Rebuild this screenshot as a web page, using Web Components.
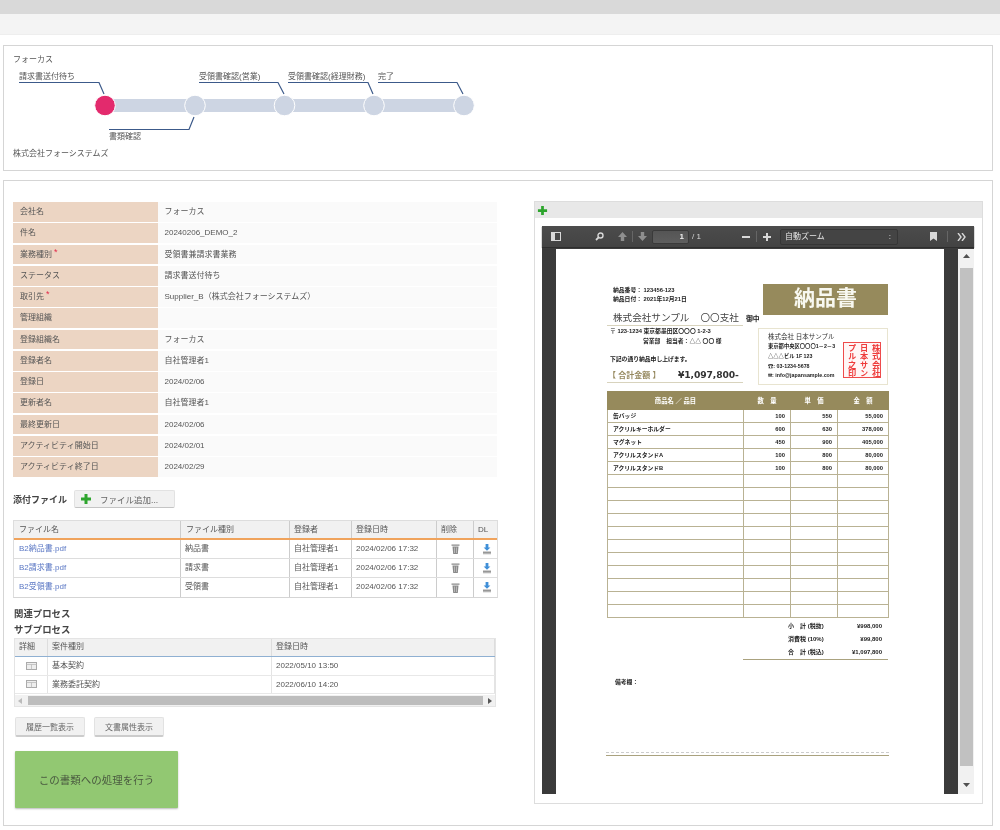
<!DOCTYPE html>
<html lang="ja">
  <head>
    <meta charset="UTF-8" />
    <title>書類詳細</title>
    <style>
      html, body { margin: 0; height: 830px; overflow: hidden; background: #fff; }
      body {
        font: 8px "Liberation Sans", "Noto Sans CJK JP", sans-serif;
        color: #555;
        filter: blur(0.42px);
      }
    </style>
  </head>
  <body>
    <app-topbar></app-topbar>
    <flow-panel company="フォーカス" footer="株式会社フォーシステムズ"></flow-panel>
    <doc-panel>
      <attr-table>
        <attr-row label="会社名">フォーカス</attr-row>
        <attr-row label="件名">20240206_DEMO_2</attr-row>
        <attr-row label="業務種別" required>受領書兼請求書業務</attr-row>
        <attr-row label="ステータス">請求書送付待ち</attr-row>
        <attr-row label="取引先" required>Supplier_B（株式会社フォーシステムズ）</attr-row>
        <attr-row label="管理組織"></attr-row>
        <attr-row label="登録組織名">フォーカス</attr-row>
        <attr-row label="登録者名">自社管理者1</attr-row>
        <attr-row label="登録日">2024/02/06</attr-row>
        <attr-row label="更新者名">自社管理者1</attr-row>
        <attr-row label="最終更新日">2024/02/06</attr-row>
        <attr-row label="アクティビティ開始日">2024/02/01</attr-row>
        <attr-row label="アクティビティ終了日">2024/02/29</attr-row>
      </attr-table>
      <file-table>
        <file-row name="B2納品書.pdf" kind="納品書"></file-row>
        <file-row name="B2請求書.pdf" kind="請求書"></file-row>
        <file-row name="B2受領書.pdf" kind="受領書"></file-row>
      </file-table>
      <sub-process>
        <sub-row kind="基本契約" date="2022/05/10 13:50"></sub-row>
        <sub-row kind="業務委託契約" date="2022/06/10 14:20"></sub-row>
      </sub-process>
      <action-bar></action-bar>
      <pdf-viewer slot="right">
        <invoice-page></invoice-page>
      </pdf-viewer>
    </doc-panel>

    <script>
      const plusIcon = (s) => `<svg width="${s}" height="${s}" viewBox="0 0 12 12"><path d="M4.5 1h3v3.5H11v3H7.5V11h-3V7.5H1v-3h3.5z" fill="#2ea52e"/></svg>`;

      class AppTopbar extends HTMLElement {
        constructor() {
          super();
          this.attachShadow({ mode: 'open' }).innerHTML = `
            <style>
              :host { display: block; }
              .a { height: 14px; background: #d9d9d9; }
              .b { height: 20px; background: #f4f4f4; border-bottom: 1px solid #eee; }
            </style>
            <div class="a"></div><div class="b"></div>`;
        }
      }
      customElements.define('app-topbar', AppTopbar);

      // 進捗ダイアグラム
      class FlowPanel extends HTMLElement {
        constructor() {
          super();
          const line = '#3c5a8a';
          const nodes = [105, 195, 284.5, 374, 464];
          const upper = [
            ['請求書送付待ち', 19, 99, 104],
            ['受領書確認(営業)', 199, 278, 284],
            ['受領書確認(経理財務)', 288, 368, 373],
            ['完了', 378, 457, 463],
          ];
          let svg = `<rect x="105" y="99" width="359" height="13" fill="#cdd5e3"/>`;
          nodes.forEach((x, i) => {
            svg += `<circle cx="${x}" cy="105.5" r="10.3" fill="${i ? '#cdd5e3' : '#e32a6d'}" stroke="#fff" stroke-width="1"/>`;
          });
          upper.forEach(([t, x1, x2, x3]) => {
            svg += `<text x="${x1}" y="79">${t}</text>`;
            svg += `<path d="M${x1} 82.5H${x2}L${x3} 94" fill="none" stroke="${line}" stroke-width="1.2"/>`;
          });
          svg += `<path d="M109 129.5H189L194 117" fill="none" stroke="${line}" stroke-width="1.2"/>`;
          svg += `<text x="109" y="139">書類確認</text>`;
          this.attachShadow({ mode: 'open' }).innerHTML = `
            <style>
              :host { display: block; margin: 10px 7px 9px 3px; border: 1px solid #d5d5d5; padding: 8px 9px 10px; height: 106px; }
              .t { line-height: 12px; }
              svg { display: block; }
              text { font: 8px "Liberation Sans", "Noto Sans CJK JP", sans-serif; fill: #555; }
            </style>
            <div class="t">${this.getAttribute('company')}</div>
            <svg width="480" height="82" viewBox="13 66 480 82">${svg}</svg>
            <div class="t">${this.getAttribute('footer')}</div>`;
        }
      }
      customElements.define('flow-panel', FlowPanel);

      class DocPanel extends HTMLElement {
        constructor() {
          super();
          this.attachShadow({ mode: 'open' }).innerHTML = `
            <style>
              :host { display: flex; gap: 35px; margin: 0 7px 0 3px; border: 1px solid #d5d5d5; padding: 20px 9px 0; height: 624px; }
              .l { width: 486px; flex: none; }
              .r { width: 449px; flex: none; }
            </style>
            <div class="l"><slot></slot></div>
            <div class="r"><slot name="right"></slot></div>`;
        }
      }
      customElements.define('doc-panel', DocPanel);

      class AttrTable extends HTMLElement {
        constructor() {
          super();
          this.attachShadow({ mode: 'open' }).innerHTML = `
            <style>
              :host { display: grid; grid-auto-rows: 1fr; row-gap: 1.4px; height: 275px; margin-top: 1px; width: 484px; }
            </style>
            <slot></slot>`;
        }
      }
      customElements.define('attr-table', AttrTable);

      class AttrRow extends HTMLElement {
        constructor() {
          super();
          const star = this.hasAttribute('required') ? '<span class="req">*</span>' : '';
          this.attachShadow({ mode: 'open' }).innerHTML = `
            <style>
              :host { display: grid; grid-template-columns: 144.5px 1fr; line-height: 19px; }
              .k { background: #ecd5c3; padding-left: 7px; }
              .v { background: #fafafa; padding-left: 7px; }
              .req { color: #e32a4a; font-size: 9px; margin-left: 2px; position: relative; top: -2px; }
            </style>
            <div class="k">${this.getAttribute('label')}${star}</div>
            <div class="v"><slot></slot></div>`;
        }
      }
      customElements.define('attr-row', AttrRow);

      class FileTable extends HTMLElement {
        constructor() {
          super();
          const head = ['ファイル名', 'ファイル種別', '登録者', '登録日時', '削除', 'DL'];
          this.attachShadow({ mode: 'open' }).innerHTML = `
            <style>
              :host { display: block; --cols: 167px 109px 62px 85px 37px 25px; }
              .bar { display: flex; align-items: center; gap: 7px; margin-top: 13px; height: 18px; }
              b { font-size: 9px; color: #444; }
              button {
                display: flex; align-items: center; width: 101px; height: 18px; padding: 0 0 0 5px; gap: 8px;
                border: 1px solid #e2e2e2; border-bottom-color: #c4c4c4; border-radius: 2px; background: #f1f1f1;
                font: 8.5px "Liberation Sans", "Noto Sans CJK JP", sans-serif; color: #666;
              }
              .tb { margin-top: 12px; width: 485px; border: 1px solid #ddd; border-bottom: 1px solid #d5d5d5; box-sizing: border-box; }
              .hd { display: grid; grid-template-columns: var(--cols); height: 19px; line-height: 17px; background: #f1f1f1; border-bottom: 2px solid #f0a35c; box-sizing: border-box; }
              .hd div { padding-left: 5px; border-right: 1px solid #ccc; }
              .hd div:nth-child(n+3) { padding-left: 4px; }
              .hd div:last-child { border-right: 0; }
            </style>
            <div class="bar"><b>添付ファイル</b><button>${plusIcon(12)}<span>ファイル追加...</span></button></div>
            <div class="tb">
              <div class="hd">${head.map((t) => `<div>${t}</div>`).join('')}</div>
              <slot></slot>
            </div>`;
        }
      }
      customElements.define('file-table', FileTable);

      class FileRow extends HTMLElement {
        constructor() {
          super();
          this.attachShadow({ mode: 'open' }).innerHTML = `
            <style>
              :host { display: grid; grid-template-columns: var(--cols); height: 19px; line-height: 18px; box-sizing: border-box; border-bottom: 1px solid #ddd; }
              :host(:last-child) { border-bottom: 0; }
              div { padding-left: 5px; border-right: 1px solid #ccc; overflow: hidden; white-space: nowrap; }
              div:nth-child(n+3) { padding-left: 4px; }
              div:last-child { border-right: 0; }
              .n { color: #5a77c4; }
              div.i { display: flex; align-items: center; justify-content: center; padding: 0; }
            </style>
            <div class="n">${this.getAttribute('name')}</div>
            <div>${this.getAttribute('kind')}</div>
            <div>自社管理者1</div>
            <div>2024/02/06 17:32</div>
            <div class="i"><svg width="9" height="10" viewBox="0 0 9 10"><path d="M0.5 .5h8v1.3h-8zM1.5 2.6h6L6.8 10H2.2z" fill="#8a8a8a"/><path d="M3.5 3.5v5.5M5.5 3.5v5.5" stroke="#ccc" stroke-width=".7"/></svg></div>
            <div class="i"><svg width="10" height="11" viewBox="0 0 10 11"><path d="M3.6 0h2.8v3.4h2L5 6.8 1.6 3.4h2z" fill="#3f8fd8"/><path d="M1 7.5h8v2.8H1z" fill="#b5b5b5"/><path d="M1 8.3h8" stroke="#777" stroke-width=".6"/></svg></div>`;
        }
      }
      customElements.define('file-row', FileRow);

      class SubProcess extends HTMLElement {
        constructor() {
          super();
          this.attachShadow({ mode: 'open' }).innerHTML = `
            <style>
              :host { display: block; --cols: 33px 224px 1fr; }
              h4 { margin: 0; font-size: 9.4px; line-height: 14px; color: #444; padding-left: 1px; }
              .rel { margin-top: 9px; }
              .sub { margin-top: 2px; }
              .tb { margin: 1px 0 0 1px; width: 482px; border: 1px solid #e4e4e4; box-sizing: border-box; }
              .hd { display: grid; grid-template-columns: var(--cols); height: 18px; line-height: 16px; background: #f1f1f1; border-bottom: 1px solid #8fb0d2; box-sizing: border-box; }
              .hd div { padding-left: 4px; border-right: 1px solid #ddd; }
              .sb { display: flex; align-items: center; height: 11px; background: #f1f1f1; margin-top: 1px; justify-content: space-between; padding: 0 3px; }
              .sb i { flex: 1; height: 9px; background: #bdbdbd; margin: 0 5px 0 6px; }
              svg { display: block; }
            </style>
            <h4 class="rel">関連プロセス</h4>
            <h4 class="sub">サブプロセス</h4>
            <div class="tb">
              <div class="hd"><div>詳細</div><div>案件種別</div><div>登録日時</div></div>
              <slot></slot>
              <div class="sb">
                <svg width="4" height="6" viewBox="0 0 4 6"><path d="M4 0v6L0 3z" fill="#bbb"/></svg>
                <i></i>
                <svg width="4" height="6" viewBox="0 0 4 6"><path d="M0 0v6l4-3z" fill="#555"/></svg>
              </div>
            </div>`;
        }
      }
      customElements.define('sub-process', SubProcess);

      class SubRow extends HTMLElement {
        constructor() {
          super();
          this.attachShadow({ mode: 'open' }).innerHTML = `
            <style>
              :host { display: grid; grid-template-columns: var(--cols); height: 18.5px; line-height: 17px; border-bottom: 1px solid #e8e8e8; box-sizing: border-box; }
              div { padding-left: 4px; border-right: 1px solid #e4e4e4; }
              div.i { display: flex; align-items: center; justify-content: center; padding: 0; }
            </style>
            <div class="i"><svg width="11" height="8" viewBox="0 0 11 8"><rect x=".5" y=".5" width="10" height="7" fill="#eee" stroke="#aaa"/><path d="M.5 2.5h10M5.5 2.5v5" stroke="#bbb" stroke-width=".8"/></svg></div>
            <div>${this.getAttribute('kind')}</div>
            <div>${this.getAttribute('date')}</div>`;
        }
      }
      customElements.define('sub-row', SubRow);

      class ActionBar extends HTMLElement {
        constructor() {
          super();
          this.attachShadow({ mode: 'open' }).innerHTML = `
            <style>
              :host { display: block; padding-left: 2px; }
              .btns { display: flex; gap: 9px; margin-top: 10px; }
              button {
                width: 70px; height: 20px; padding: 0; border: 1px solid #e2e2e2; border-bottom: 2px solid #ccc; border-radius: 2px;
                background: #f1f1f1; font: 8px "Liberation Sans", "Noto Sans CJK JP", sans-serif; color: #666;
              }
              .go {
                display: block; margin-top: 14px; width: 163px; height: 57px; border: 0; border-radius: 1px;
                background: #92c872; box-shadow: 0 1px 2px #bbb; font-size: 10.5px; color: #4a5a40;
              }
            </style>
            <div class="btns"><button>履歴一覧表示</button><button>文書属性表示</button></div>
            <button class="go">この書類への処理を行う</button>`;
        }
      }
      customElements.define('action-bar', ActionBar);

      class PdfViewer extends HTMLElement {
        constructor() {
          super();
          const c = '#d8d8d8';
          this.attachShadow({ mode: 'open' }).innerHTML = `
            <style>
              :host { display: block; border: 1px solid #ddd; height: 603px; box-sizing: border-box; }
              .cap { height: 16px; background: #e8e8e8; display: flex; align-items: center; padding-left: 2px; }
              .view { margin: 8px 8px 0 7px; height: 568px; background: #404040; display: flex; flex-direction: column; }
              .tool {
                flex: none; height: 21px; background: linear-gradient(#4c4c4c, #434343); display: flex; align-items: center; color: ${c};
                box-shadow: 0 1px 1px #2e2e2e; padding-left: 9px;
              }
              .tool > * { flex: none; }
              .sep { width: 1px; height: 11px; background: #666; }
              .num { width: 37px; height: 14px; box-sizing: border-box; background: linear-gradient(#555, #5e5e5e); border: 1px solid #3a3a3a; border-radius: 2px; text-align: right; padding-right: 4px; line-height: 12px; font-size: 8px; font-weight: bold; color: #eee; }
              .sel { width: 118px; height: 16px; box-sizing: border-box; background: #444; border: 1px solid #363636; border-radius: 2px; display: flex; justify-content: space-between; padding: 0 6px 0 4px; line-height: 14px; color: #e6e6e6; }
              .main { flex: 1; display: flex; min-height: 0; padding-top: 2px; }
              .can { flex: 1; padding: 0 14px; background: linear-gradient(90deg, #3a3a3a, #444 50%, #3a3a3a); overflow: hidden; }
              .sbar { width: 16px; background: #f1f1f1; display: flex; flex-direction: column; align-items: center; }
              .sbar i { width: 13px; flex: 1; background: #c1c1c1; margin: 10px 0 17px; }
              .sbar svg { margin-top: 5px; }
              .sbar svg:last-child { margin: 0 0 7px; }
              svg { display: block; }
            </style>
            <div class="cap">${plusIcon(11)}</div>
            <div class="view">
              <div class="tool">
                <svg width="10" height="9" viewBox="0 0 10 9"><rect x=".5" y=".5" width="9" height="8" fill="none" stroke="${c}"/><path d="M1 1h3v7H1z" fill="${c}"/></svg>
                <svg style="margin-left:34px" width="9" height="9" viewBox="0 0 9 9"><circle cx="5.5" cy="3.5" r="2.5" fill="none" stroke="${c}" stroke-width="1.4"/><path d="M3.6 5.4L1 8" stroke="${c}" stroke-width="1.8"/></svg>
                <svg style="margin-left:14px" width="9" height="9" viewBox="0 0 9 9"><path d="M4.5 0L9 5H6.2v4H2.8V5H0z" fill="#8f8f8f"/></svg>
                <div class="sep" style="margin:0 5px 0 5px"></div>
                <svg width="9" height="9" viewBox="0 0 9 9"><path d="M4.5 9L0 4h2.8V0h3.4v4H9z" fill="#8f8f8f"/></svg>
                <div class="num" style="margin-left:5px">1</div>
                <span style="margin-left:3px">/ 1</span>
                <svg style="margin-left:41px" width="8" height="8" viewBox="0 0 8 8"><path d="M0 3h8v2H0z" fill="${c}"/></svg>
                <div class="sep" style="margin:0 6px 0 6px"></div>
                <svg width="8" height="8" viewBox="0 0 8 8"><path d="M3 0h2v3h3v2H5v3H3V5H0V3h3z" fill="${c}"/></svg>
                <div class="sel" style="margin-left:9px"><span>自動ズーム</span><span>:</span></div>
                <svg style="margin-left:32px" width="7" height="9" viewBox="0 0 7 9"><path d="M0 0h7v9L3.5 6.5 0 9z" fill="${c}"/></svg>
                <div class="sep" style="margin-left:10px"></div>
                <svg style="margin-left:9px" width="9" height="8" viewBox="0 0 9 8"><path d="M1 0l3 4-3 4M5 0l3 4-3 4" fill="none" stroke="${c}" stroke-width="1.4"/></svg>
              </div>
              <div class="main">
                <div class="can"><slot></slot></div>
                <div class="sbar">
                  <svg width="7" height="4" viewBox="0 0 7 4"><path d="M0 4l3.5-4L7 4z" fill="#505050"/></svg>
                  <i></i>
                  <svg width="7" height="4" viewBox="0 0 7 4"><path d="M0 0l3.5 4L7 0z" fill="#505050"/></svg>
                </div>
              </div>
            </div>`;
        }
      }
      customElements.define('pdf-viewer', PdfViewer);

      class InvoicePage extends HTMLElement {
        constructor() {
          super();
          const items = [
            ['缶バッジ', '100', '550', '55,000'],
            ['アクリルキーホルダー', '600', '630', '378,000'],
            ['マグネット', '450', '900', '405,000'],
            ['アクリルスタンドA', '100', '800', '80,000'],
            ['アクリルスタンドB', '100', '800', '80,000'],
          ];
          let rows = '';
          for (let i = 0; i < 16; i++) {
            const r = items[i] || ['', '', '', ''];
            rows += `<tr><td class="nm">${r[0]}</td><td>${r[1]}</td><td>${r[2]}</td><td>${r[3]}</td></tr>`;
          }
          this.attachShadow({ mode: 'open' }).innerHTML = `
            <style>
              :host { display: block; width: 388px; height: 545px; background: #fff; padding: 35px 0 0 51px; box-sizing: border-box; color: #222; font-size: 5.8px; font-weight: bold; }
              .head { display: flex; height: 107px; width: 282px; }
              .left { width: 151px; flex: none; }
              .right { width: 130px; flex: none; }
              .ln { line-height: 9px; padding-left: 6px; white-space: nowrap; }
              .co { margin-top: 6px; width: 136px; height: 16px; line-height: 15px; box-sizing: border-box; border-bottom: 1px solid #d8d3bd; font-size: 9.6px; font-weight: normal; color: #444; padding-left: 6px; white-space: nowrap; position: relative; }
              .co em { font-style: normal; margin-left: 11px; }
              .co span { position: absolute; left: 139px; top: 1px; font-size: 6.8px; font-weight: bold; color: #222; }
              .ad { line-height: 10px; padding-left: 3px; white-space: nowrap; }
              .ad2 { padding-left: 36px; }
              .msg { margin-top: 8px; line-height: 10px; padding-left: 3px; white-space: nowrap; }
              .sum { margin-top: 2px; width: 136px; height: 17px; box-sizing: border-box; border-bottom: 1px solid #d8d3bd; display: flex; align-items: center; white-space: nowrap; padding-left: 1px; }
              .sum .a { flex: none; font-size: 8px; color: #96895f; width: 70px; font-weight: bold; }
              .sum .b { flex: none; font: bold 9.2px "DejaVu Sans", sans-serif; color: #333; letter-spacing: -.1px; }
              .ttl { margin-left: 5px; width: 125px; height: 31px; background: #968a5c; color: #f8f8f0; font-size: 21px; line-height: 24px; text-align: center; font-weight: bold; font-family: "Noto Sans CJK JP", sans-serif; }
              .snd { margin-top: 13px; height: 57px; box-sizing: border-box; border: 1px solid #e8e4d0; padding: 3px 0 0 9px; display: flex; font-size: 5.3px; }
              .snd .txt { flex: 1; width: 0; }
              .snd .nm { font-size: 6.5px; font-weight: normal; line-height: 10px; color: #333; white-space: nowrap; }
              .snd .t { line-height: 9.8px; white-space: nowrap; }
              .stamp { flex: none; align-self: flex-end; writing-mode: vertical-rl; width: 38px; height: 36px; box-sizing: border-box; margin: 0 6px 6px 0; border: 1px solid #ee4b4b; background: #fff6f6; color: #ee3b3b; font-size: 8.2px; line-height: 12px; font-weight: bold; word-break: break-all; text-align: center; }
              table { border-collapse: collapse; table-layout: fixed; width: 281px; }
              th { background: #968a5c; height: 17px; padding: 0; color: #fff; font-size: 6.3px; border: 1px solid #968a5c; }
              td { height: 12px; padding: 0 5px; border: 1px solid #b9b293; text-align: right; line-height: 10px; white-space: nowrap; }
              td.nm { text-align: left; }
              .tot { margin: 2px 0 0 136px; width: 145px; border-bottom: 1px solid #aaa27f; height: 39px; }
              .tot div { display: grid; grid-template-columns: 45px 1fr; height: 13px; line-height: 13px; padding: 0 6px 0 45px; white-space: nowrap; font-size: 6px; }
              .tot u { text-decoration: none; text-align: right; }
              .note { margin: 17px 0 0 8px; line-height: 10px; }
              .rule { margin: 65px 0 0 -1px; width: 283px; height: 4px; border-top: 1px dashed #ccc; border-bottom: 1px solid #aaa27f; box-sizing: border-box; }
            </style>
            <div class="head">
              <div class="left">
                <div style="height:2px"></div>
                <div class="ln">納品番号： 123456-123</div>
                <div class="ln">納品日付： 2021年12月21日</div>
                <div class="co">株式会社サンプル<em>〇〇支社</em><span>御中</span></div>
                <div class="ad">〒 123-1234 東京都墨田区〇〇〇 1-2-3</div>
                <div class="ad ad2">営業部　担当者：△△ 〇〇 様</div>
                <div class="msg">下記の通り納品申し上げます。</div>
                <div class="sum"><span class="a">【 合計金額 】</span><span class="b">¥1,097,800-</span></div>
              </div>
              <div class="right">
                <div class="ttl">納品書</div>
                <div class="snd">
                  <div class="txt">
                    <div class="nm">株式会社 日本サンプル</div>
                    <div class="t">東京都中央区〇〇〇1－2－3</div>
                    <div class="t">△△△ビル 1F 123</div>
                    <div class="t">☎: 03-1234-5678</div>
                    <div class="t">✉: info@japansample.com</div>
                  </div>
                  <div class="stamp">株式会社日本サンプル之印</div>
                </div>
              </div>
            </div>
            <table>
              <colgroup><col style="width:136px"><col style="width:47px"><col style="width:47px"><col style="width:51px"></colgroup>
              <tr><th>商品名 ／ 品目</th><th>数　量</th><th>単　価</th><th>金　額</th></tr>
              ${rows}
            </table>
            <div class="tot">
              <div><span>小　計 (税抜)</span><u>¥998,000</u></div>
              <div><span>消費税 (10%)</span><u>¥99,800</u></div>
              <div><span>合　計 (税込)</span><u>¥1,097,800</u></div>
            </div>
            <div class="note">備考欄：</div>
            <div class="rule"></div>`;
        }
      }
      customElements.define('invoice-page', InvoicePage);
    </script>
  </body>
</html>
